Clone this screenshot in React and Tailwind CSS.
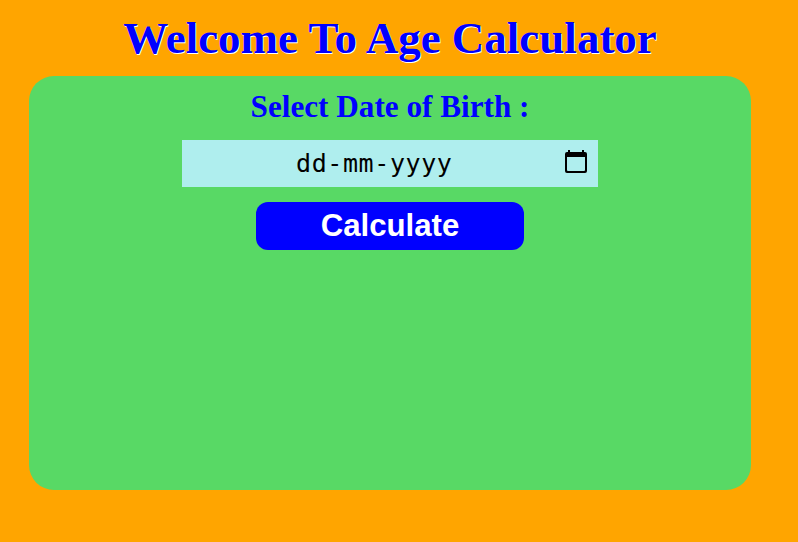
export default function App() {
  return (
    <div className="h-[542px] w-[798px] overflow-hidden bg-[#ffa500] pt-[11px] font-['Liberation_Serif',serif] font-bold">
      <div className="ml-[29px] w-[722px]">
        <h1 className="flex h-[65px] justify-center whitespace-nowrap text-[45px] leading-[54px] text-[#0000ff] [text-shadow:1px_1px_0_#ffffff]">
          Welcome To Age Calculator
        </h1>
        <main className="flex h-[414px] flex-col items-center rounded-[25px] bg-[#58d965] pt-[12px]">
          <label className="h-[52px] whitespace-nowrap text-[31.2px] leading-[38px] text-[#0000ff]">Select Date of Birth :</label>
          <div className="flex h-[47px] w-[416px] items-start bg-[#afeeee] pl-[114px] pr-[11px] pt-[10px] font-['DejaVu_Sans_Mono',monospace] font-normal text-black">
            <span className="whitespace-nowrap text-[25px] leading-[28px] tracking-[0.6px]">dd-mm-yyyy</span>
            <svg className="ml-auto h-[23px] w-[22px]" viewBox="0 0 22 23"><path fill="#000" fillRule="evenodd" d="M3 0h2v2h12V0h2v2h1q2 0 2 2v17q0 2-2 2H2q-2 0-2-2V4q0-2 2-2h1zM2 7v13q0 1 1 1h16q1 0 1-1V7z" /></svg>
          </div>
          <button className="mt-[15px] h-[48px] w-[268px] rounded-[12px] bg-[#0000ff] font-['Liberation_Sans',sans-serif] text-[31.2px] font-bold leading-[48px] text-white">Calculate</button>
        </main>
      </div>
    </div>
  );
}
